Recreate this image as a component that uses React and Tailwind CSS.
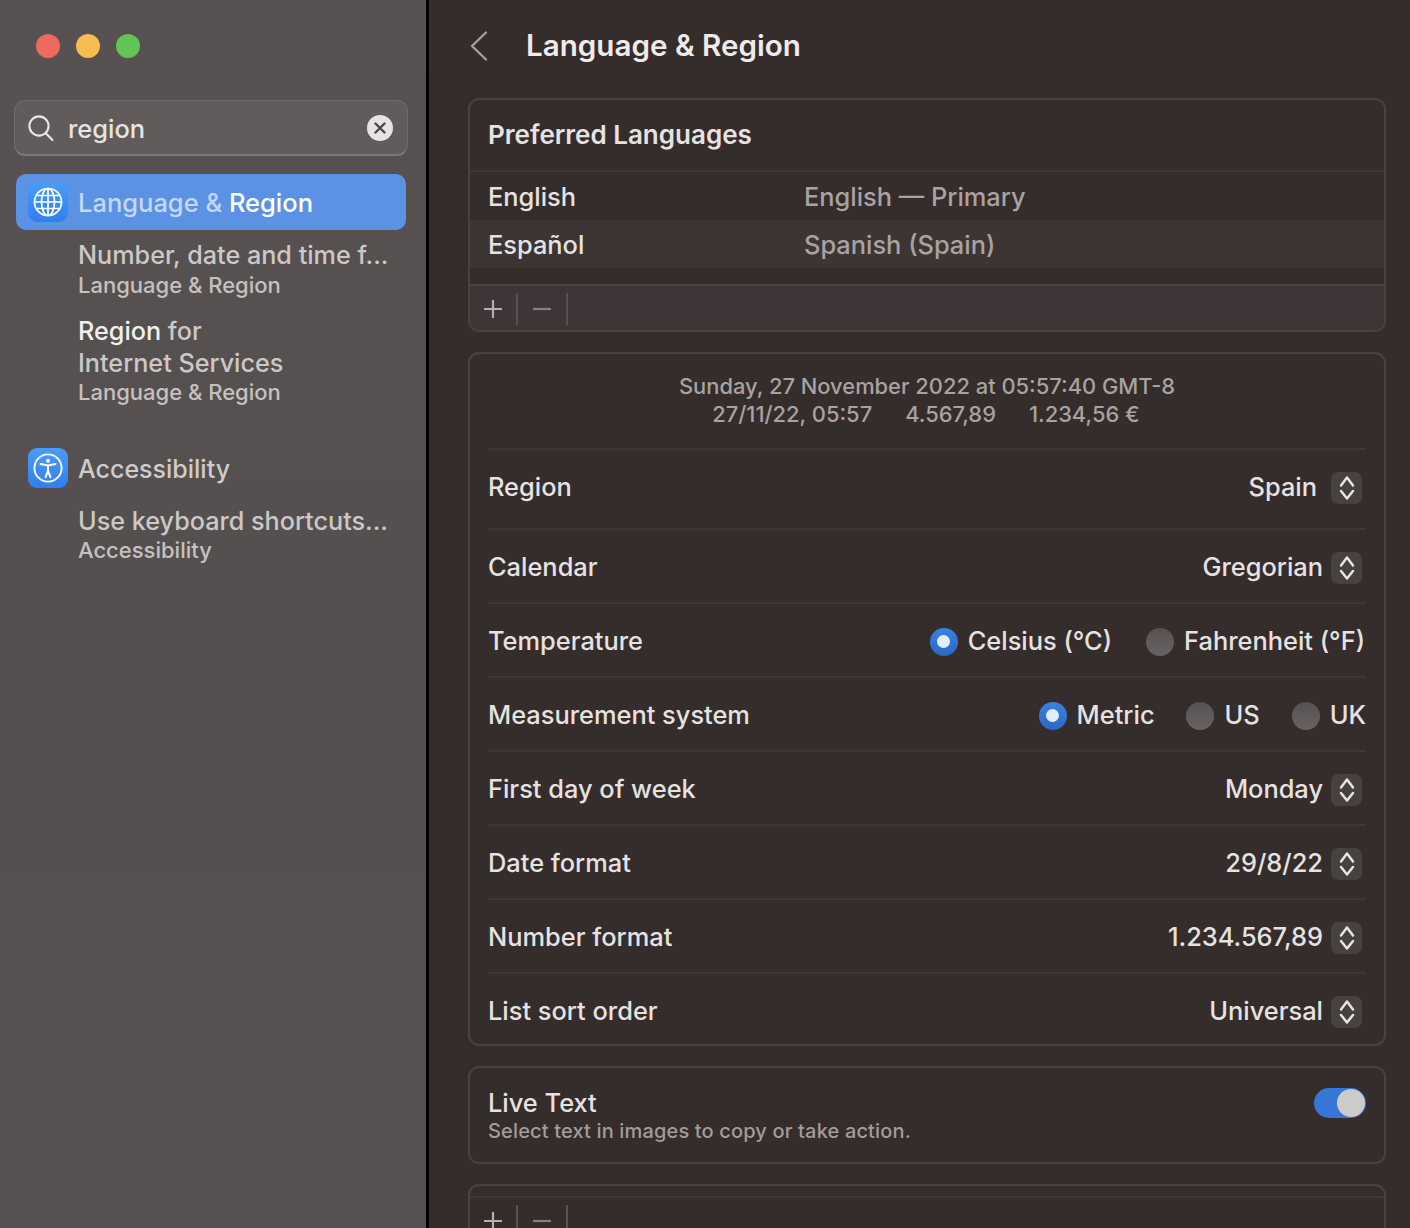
import React from 'react';

const font = { fontFamily: 'Inter, "Noto Sans", sans-serif' };

const Stepper = () => (
  <div className="w-[31px] h-8 rounded-[7px] bg-[#474140] flex items-center justify-center shrink-0">
    <svg width="16" height="26" viewBox="0 0 16 26" fill="none" stroke="#e8e4e3" strokeWidth="2.5" strokeLinecap="round" strokeLinejoin="round">
      <path d="M2 10.5 8 2.5 14 10.5" />
      <path d="M2 16 8 23.5 14 16" />
    </svg>
  </div>
);

const Radio = ({ on }) =>
  on ? (
    <div className="w-7 h-7 rounded-full bg-gradient-to-b from-[#3b82e0] to-[#2a68c4] flex items-center justify-center shrink-0">
      <div className="w-[13px] h-[13px] rounded-full bg-[#e3edfb]" />
    </div>
  ) : (
    <div className="w-7 h-7 rounded-full bg-gradient-to-b from-[#565050] to-[#696463] shrink-0" />
  );

const Row = ({ label, height, last, children }) => (
  <div className={`flex items-center justify-between ${height} ${last ? '' : 'border-b-2 border-[#3f3737]'}`}>
    <span className="-mt-[2px]">{label}</span>
    {children}
  </div>
);

const SelectValue = ({ value, gap = 'gap-[8px]' }) => (
  <div className={`flex items-center ${gap} pr-[4px]`}>
    <span className="-mt-[2px]">{value}</span>
    <Stepper />
  </div>
);

const PlusMinus = ({ height }) => (
  <div className={`flex items-center ${height}`}>
    <div className="w-[46px] flex justify-center">
      <svg width="20" height="20" viewBox="0 0 20 20" stroke="#b5afae" strokeWidth="2.2">
        <path d="M10 1v18M1 10h18" />
      </svg>
    </div>
    <div className="w-[2px] h-8 bg-[#575150]" />
    <div className="w-[48px] flex justify-center">
      <svg width="20" height="20" viewBox="0 0 20 20" stroke="#868080" strokeWidth="2.2">
        <path d="M1 10h18" />
      </svg>
    </div>
    <div className="w-[2px] h-8 bg-[#575150]" />
  </div>
);

const SearchResult = ({ lines, sub, className = '', subClass = '' }) => (
  <div className={`pl-[78px] pr-2 ${className}`}>
    {lines.map((l, i) => (
      <div key={i} className="text-[25.2px] leading-8 text-[#cdc8c7] whitespace-nowrap">{l}</div>
    ))}
    <div className={`text-[22px] leading-[26px] text-[#c6c1c0] whitespace-nowrap ${subClass}`}>{sub}</div>
  </div>
);

export default function App() {
  return (
    <div className="w-[1410px] h-[1228px] flex overflow-hidden text-[25.4px] font-[450] text-[#e6e2e1]" style={font}>
      {/* Sidebar */}
      <aside className="w-[429px] h-full shrink-0 border-r-[3px] border-black bg-gradient-to-b from-[#575251] via-[#555050] to-[#565150]">
        <div className="flex gap-4 pl-9 pt-[34px]">
          <div className="w-6 h-6 rounded-full bg-[#ee6a5f]" />
          <div className="w-6 h-6 rounded-full bg-[#f5bd4f]" />
          <div className="w-6 h-6 rounded-full bg-[#61c454]" />
        </div>

        <div className="mt-[42px] ml-[14px] w-[394px] h-[56px] rounded-[11px] border border-[#6f6a69] border-b-2 border-b-[#7d7877] bg-[#615c5b] flex items-center pl-[13px] pr-[14px]">
          <svg width="26" height="28" viewBox="0 0 26 28" fill="none" stroke="#e9e6e5" strokeWidth="2.1" strokeLinecap="round">
            <circle cx="11" cy="12" r="9.6" />
            <path d="M18 19.5 24.5 26" />
          </svg>
          <span className="ml-[14px] mt-[4px] text-[#e6e3e2]">region</span>
          <div className="ml-auto w-[26px] h-[26px] rounded-full bg-[#e6e4e3] flex items-center justify-center">
            <svg width="12" height="12" viewBox="0 0 12 12" stroke="#4b4645" strokeWidth="2.4" strokeLinecap="round">
              <path d="M1.5 1.5l9 9M10.5 1.5l-9 9" />
            </svg>
          </div>
        </div>

        <div className="mt-[18px] ml-4 w-[390px] h-14 rounded-[10px] bg-[#5b92e4] flex items-center pl-3">
          <div className="w-10 h-10 rounded-[9px] bg-gradient-to-b from-[#4c9bf8] to-[#2f7fee] flex items-center justify-center shrink-0">
            <svg width="30" height="30" viewBox="0 0 30 30" fill="none" stroke="#fff" strokeWidth="1.7">
              <circle cx="15" cy="15" r="13.5" />
              <ellipse cx="15" cy="15" rx="6.5" ry="13.5" />
              <path d="M15 1.5v27M1.5 15h27M3.4 8.5h23.2M3.4 21.5h23.2" />
            </svg>
          </div>
          <span className="ml-[10px] mt-[2px] text-[25.5px] text-[#c3d8f7]">Language &amp; <span className="text-white">Region</span></span>
        </div>

        <SearchResult className="mt-[9px]" subClass="mt-[1px]" lines={['Number, date and time f...']} sub="Language & Region" />
        <SearchResult
          className="mt-[17px]"
          lines={[<><span className="text-[#f1efee]">Region</span> for</>, 'Internet Services']}
          sub="Language & Region"
        />

        <div className="mt-[42px] ml-7 flex items-center">
          <div className="w-10 h-10 rounded-[9px] bg-gradient-to-b from-[#4c9bf8] to-[#2f7fee] flex items-center justify-center shrink-0">
            <svg width="30" height="30" viewBox="0 0 30 30" fill="none" stroke="#fff" strokeLinecap="round" strokeLinejoin="round">
              <circle cx="15" cy="15" r="13.6" strokeWidth="1.9" />
              <circle cx="15" cy="7.8" r="2" fill="#fff" stroke="none" />
              <path d="M7.5 11 15 12.6 22.5 11" strokeWidth="2" />
              <path d="M15 12.6v5M15 17.6l-2.4 6.6M15 17.6l2.4 6.6" strokeWidth="2" />
            </svg>
          </div>
          <span className="ml-[10px] mt-[4px] text-[25px] text-[#d0cbca]">Accessibility</span>
        </div>

        <SearchResult className="mt-[16px]" lines={['Use keyboard shortcuts...']} sub="Accessibility" />
      </aside>

      {/* Content */}
      <main className="flex-1 h-full bg-[#352c2c] pl-[39px] pr-6 overflow-hidden">
        <header className="h-[98px] flex items-center pb-[6px]">
          <svg width="20" height="32" viewBox="0 0 20 32" fill="none" stroke="#a59f9e" strokeWidth="2.4" strokeLinecap="round" strokeLinejoin="round" className="ml-[1px]">
            <path d="M17 2.5 3 16l14 13.5" />
          </svg>
          <h1 className="ml-[37px] -mt-[1px] text-[29.6px] font-semibold text-[#eeebea]">Language &amp; Region</h1>
        </header>

        {/* Preferred languages */}
        <section className="h-[234px] rounded-[11px] border-2 border-[#4a4241] overflow-hidden flex flex-col">
          <div className="h-[72px] shrink-0 flex items-center pl-[18px] pb-[2px] text-[26px] font-semibold text-[#e6e2e1] border-b-2 border-[#3f3737]">Preferred Languages</div>
          <div className="h-12 shrink-0 flex items-center pl-[18px] pt-[2px]">
            <span className="w-[316px]">English</span>
            <span className="text-[#a8a2a1]">English — Primary</span>
          </div>
          <div className="h-12 shrink-0 flex items-center pl-[18px] pt-[2px] bg-[#3d3534]">
            <span className="w-[316px]">Español</span>
            <span className="text-[#a8a2a1]">Spanish (Spain)</span>
          </div>
          <div className="flex-1 mt-4 bg-[#3e3636] border-t-2 border-[#4a4241]">
            <PlusMinus height="h-[46px]" />
          </div>
        </section>

        {/* Formats */}
        <section className="mt-5 h-[694px] rounded-[11px] border-2 border-[#4a4241] pl-[18px] pr-[18px]">
          <div className="h-[96px] pt-[18px] border-b-2 border-[#3f3737] text-center text-[21.9px] leading-7 text-[#a8a2a1]">
            <div>Sunday, 27 November 2022 at 05:57:40 GMT-8</div>
            <div className="flex justify-center gap-[33px] pr-[2px]">
              <span>27/11/22, 05:57</span>
              <span>4.567,89</span>
              <span>1.234,56 €</span>
            </div>
          </div>
          <Row label="Region" height="h-20 pb-[2px]"><SelectValue value="Spain" gap="gap-[14px]" /></Row>
          <Row label="Calendar" height="h-[74px] pt-[4px]"><SelectValue value="Gregorian" /></Row>
          <Row label="Temperature" height="h-[74px] pt-[4px]">
            <div className="flex items-center pr-[1px]">
              <Radio on />
              <span className="ml-[10px] -mt-[2px]">Celsius (°C)</span>
              <div className="ml-[34px]"><Radio /></div>
              <span className="ml-[10px] -mt-[2px]">Fahrenheit (°F)</span>
            </div>
          </Row>
          <Row label="Measurement system" height="h-[74px] pt-[4px]">
            <div className="flex items-center">
              <Radio on />
              <span className="ml-[10px] -mt-[2px]">Metric</span>
              <div className="ml-[31px]"><Radio /></div>
              <span className="ml-[11px] -mt-[2px]">US</span>
              <div className="ml-[32px]"><Radio /></div>
              <span className="ml-[10px] -mt-[2px]">UK</span>
            </div>
          </Row>
          <Row label="First day of week" height="h-[74px] pt-[4px]"><SelectValue value="Monday" /></Row>
          <Row label="Date format" height="h-[74px] pt-[4px]"><SelectValue value="29/8/22" /></Row>
          <Row label="Number format" height="h-[74px] pt-[4px]"><SelectValue value="1.234.567,89" /></Row>
          <Row label="List sort order" height="h-[71px] pt-[6px]" last><SelectValue value="Universal" /></Row>
        </section>

        {/* Live text */}
        <section className="mt-5 h-[98px] rounded-[11px] border-2 border-[#4a4241] pl-[18px] pr-[18px] pt-[19px] flex justify-between items-start">
          <div>
            <div className="leading-8">Live Text</div>
            <div className="text-[20px] leading-6 tracking-[0.15px] text-[#a29c9b]">Select text in images to copy or take action.</div>
          </div>
          <div className="w-[52px] h-[30px] rounded-full bg-[#3576d6] flex items-center justify-end pr-[1px] mt-[1px]">
            <div className="w-7 h-7 rounded-full bg-[#cdcaca]" />
          </div>
        </section>

        {/* Next card, cut off */}
        <section className="mt-5 h-[70px] rounded-t-[11px] border-2 border-b-0 border-[#4a4241] pt-[10px]">
          <div className="border-t-2 border-[#3f3737]">
            <PlusMinus height="h-[46px]" />
          </div>
        </section>
      </main>
    </div>
  );
}
